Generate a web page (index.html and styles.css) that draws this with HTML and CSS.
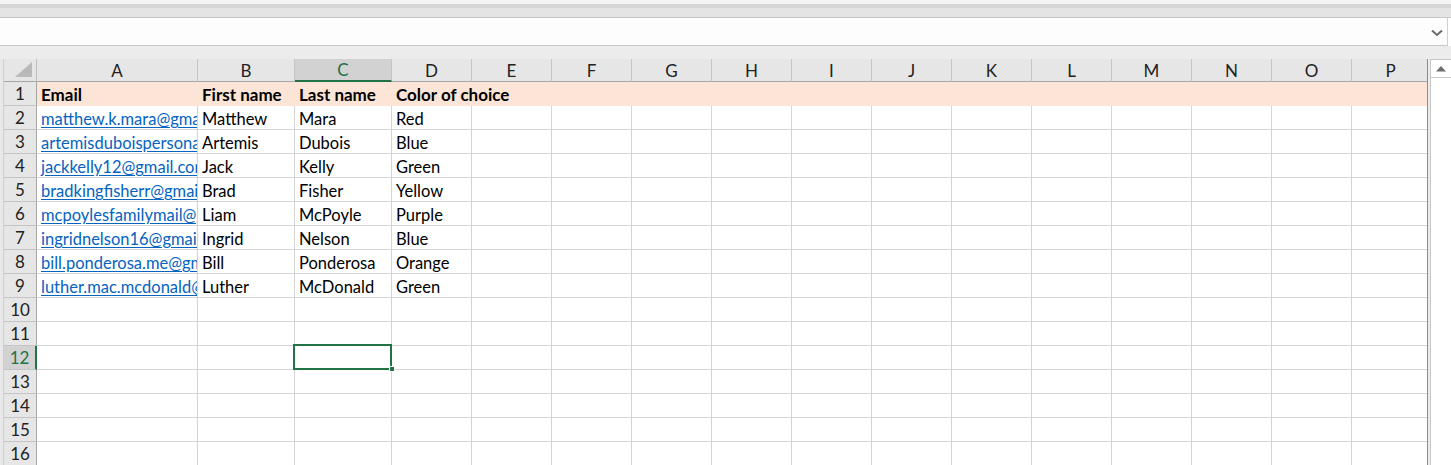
FILE: index.html
```html
<!DOCTYPE html>
<html>
<head>
<meta charset="utf-8">
<link rel="stylesheet" href="styles.css">
</head>
<body>
<div class="ribbon-edge"><div class="band1"></div><div class="band2"></div><div class="band3"></div></div>
<div class="formula-bar">
  <div class="formula-input"></div>
  <svg class="chev" width="12" height="8" viewBox="0 0 12 8"><path d="M1 1.5 L6 6 L11 1.5" fill="none" stroke="#6a6a6a" stroke-width="2"/></svg>
</div>
<div class="gap"></div>
<div class="workspace">
  <div class="gutter"></div>
  <div class="sheet">
    <div class="corner"><svg width="24" height="20" viewBox="0 0 24 20"><polygon points="22,3 22,18 5,18" fill="#b9b9b9"/></svg></div>
    <div class="ch">A</div><div class="ch">B</div><div class="ch sel">C</div><div class="ch">D</div><div class="ch">E</div><div class="ch">F</div><div class="ch">G</div><div class="ch">H</div><div class="ch">I</div><div class="ch">J</div><div class="ch">K</div><div class="ch">L</div><div class="ch">M</div><div class="ch">N</div><div class="ch">O</div><div class="ch">P</div>

    <div class="rh">1</div><div class="c hd">Email</div><div class="c hd">First name</div><div class="c hd">Last name</div><div class="c hd over">Color of choice</div><div class="c hd"></div><div class="c hd"></div><div class="c hd"></div><div class="c hd"></div><div class="c hd"></div><div class="c hd"></div><div class="c hd"></div><div class="c hd"></div><div class="c hd"></div><div class="c hd"></div><div class="c hd"></div><div class="c hd"></div>

    <div class="rh">2</div><div class="c link">matthew.k.mara@gmail.com</div><div class="c">Matthew</div><div class="c">Mara</div><div class="c">Red</div><div class="c"></div><div class="c"></div><div class="c"></div><div class="c"></div><div class="c"></div><div class="c"></div><div class="c"></div><div class="c"></div><div class="c"></div><div class="c"></div><div class="c"></div><div class="c"></div>

    <div class="rh">3</div><div class="c link">artemisduboispersonal@gmail.com</div><div class="c">Artemis</div><div class="c">Dubois</div><div class="c">Blue</div><div class="c"></div><div class="c"></div><div class="c"></div><div class="c"></div><div class="c"></div><div class="c"></div><div class="c"></div><div class="c"></div><div class="c"></div><div class="c"></div><div class="c"></div><div class="c"></div>

    <div class="rh">4</div><div class="c link">jackkelly12@gmail.com</div><div class="c">Jack</div><div class="c">Kelly</div><div class="c">Green</div><div class="c"></div><div class="c"></div><div class="c"></div><div class="c"></div><div class="c"></div><div class="c"></div><div class="c"></div><div class="c"></div><div class="c"></div><div class="c"></div><div class="c"></div><div class="c"></div>

    <div class="rh">5</div><div class="c link">bradkingfisherr@gmail.com</div><div class="c">Brad</div><div class="c">Fisher</div><div class="c">Yellow</div><div class="c"></div><div class="c"></div><div class="c"></div><div class="c"></div><div class="c"></div><div class="c"></div><div class="c"></div><div class="c"></div><div class="c"></div><div class="c"></div><div class="c"></div><div class="c"></div>

    <div class="rh">6</div><div class="c link">mcpoylesfamilymail@gmail.com</div><div class="c">Liam</div><div class="c">McPoyle</div><div class="c">Purple</div><div class="c"></div><div class="c"></div><div class="c"></div><div class="c"></div><div class="c"></div><div class="c"></div><div class="c"></div><div class="c"></div><div class="c"></div><div class="c"></div><div class="c"></div><div class="c"></div>

    <div class="rh">7</div><div class="c link">ingridnelson16@gmail.com</div><div class="c">Ingrid</div><div class="c">Nelson</div><div class="c">Blue</div><div class="c"></div><div class="c"></div><div class="c"></div><div class="c"></div><div class="c"></div><div class="c"></div><div class="c"></div><div class="c"></div><div class="c"></div><div class="c"></div><div class="c"></div><div class="c"></div>

    <div class="rh">8</div><div class="c link">bill.ponderosa.me@gmail.com</div><div class="c">Bill</div><div class="c">Ponderosa</div><div class="c">Orange</div><div class="c"></div><div class="c"></div><div class="c"></div><div class="c"></div><div class="c"></div><div class="c"></div><div class="c"></div><div class="c"></div><div class="c"></div><div class="c"></div><div class="c"></div><div class="c"></div>

    <div class="rh">9</div><div class="c link">luther.mac.mcdonald@gmail.com</div><div class="c">Luther</div><div class="c">McDonald</div><div class="c">Green</div><div class="c"></div><div class="c"></div><div class="c"></div><div class="c"></div><div class="c"></div><div class="c"></div><div class="c"></div><div class="c"></div><div class="c"></div><div class="c"></div><div class="c"></div><div class="c"></div>

    <div class="rh">10</div><div class="c"></div><div class="c"></div><div class="c"></div><div class="c"></div><div class="c"></div><div class="c"></div><div class="c"></div><div class="c"></div><div class="c"></div><div class="c"></div><div class="c"></div><div class="c"></div><div class="c"></div><div class="c"></div><div class="c"></div><div class="c"></div>

    <div class="rh">11</div><div class="c"></div><div class="c"></div><div class="c"></div><div class="c"></div><div class="c"></div><div class="c"></div><div class="c"></div><div class="c"></div><div class="c"></div><div class="c"></div><div class="c"></div><div class="c"></div><div class="c"></div><div class="c"></div><div class="c"></div><div class="c"></div>

    <div class="rh sel">12</div><div class="c"></div><div class="c"></div><div class="c active"></div><div class="c"></div><div class="c"></div><div class="c"></div><div class="c"></div><div class="c"></div><div class="c"></div><div class="c"></div><div class="c"></div><div class="c"></div><div class="c"></div><div class="c"></div><div class="c"></div><div class="c"></div>

    <div class="rh">13</div><div class="c"></div><div class="c"></div><div class="c"></div><div class="c"></div><div class="c"></div><div class="c"></div><div class="c"></div><div class="c"></div><div class="c"></div><div class="c"></div><div class="c"></div><div class="c"></div><div class="c"></div><div class="c"></div><div class="c"></div><div class="c"></div>

    <div class="rh">14</div><div class="c"></div><div class="c"></div><div class="c"></div><div class="c"></div><div class="c"></div><div class="c"></div><div class="c"></div><div class="c"></div><div class="c"></div><div class="c"></div><div class="c"></div><div class="c"></div><div class="c"></div><div class="c"></div><div class="c"></div><div class="c"></div>

    <div class="rh">15</div><div class="c"></div><div class="c"></div><div class="c"></div><div class="c"></div><div class="c"></div><div class="c"></div><div class="c"></div><div class="c"></div><div class="c"></div><div class="c"></div><div class="c"></div><div class="c"></div><div class="c"></div><div class="c"></div><div class="c"></div><div class="c"></div>

    <div class="rh">16</div><div class="c"></div><div class="c"></div><div class="c"></div><div class="c"></div><div class="c"></div><div class="c"></div><div class="c"></div><div class="c"></div><div class="c"></div><div class="c"></div><div class="c"></div><div class="c"></div><div class="c"></div><div class="c"></div><div class="c"></div><div class="c"></div>
  </div>
  <div class="scrollbar">
    <div class="sb-up"><svg width="12" height="7" viewBox="0 0 12 7"><polygon points="1,6.5 11,6.5 6,1" fill="#6d6d6d"/></svg></div>
    <div class="sb-track"></div>
  </div>
</div>
</body>
</html>
```
FILE: styles.css
```css
html, body {
  margin: 0;
  padding: 0;
  height: 465px;
  overflow: hidden;
  background: #ffffff;
  font-family: Lato, "Liberation Sans", sans-serif;
}

.ribbon-edge {
  height: 17px;
  display: flex;
  flex-direction: column;
  border-bottom: 1px solid #c6c6c6;
}
.band1 { height: 4px; background: #f3f3f3; }
.band2 { height: 4px; background: #d6d6d6; }
.band3 { flex: 1; background: #e4e4e4; }

.formula-bar {
  height: 28px;
  width: 1448px;
  box-sizing: border-box;
  background: #fdfdfd;
  border-right: 1px solid #d0d0d0;
  border-bottom: 1px solid #c6c6c6;
  display: flex;
  align-items: center;
}
.formula-input { flex: 1; }
.chev { margin-right: 4px; margin-top: 2px; }

.gap {
  height: 13px;
  background: #ececec;
}

.workspace {
  display: flex;
  height: 420px;
  background: #ececec;
}
.gutter {
  width: 4px;
  background: #e8e8e8;
  border-right: 1px solid #cfcfcf;
  box-sizing: border-box;
}

.sheet {
  display: grid;
  grid-template-columns: 33px 161px 97px 97px repeat(12, 80px) 78px;
  grid-template-rows: 23px repeat(16, 24px);
  background: #ffffff;
  border-right: 1px solid #8c8c8c;
  overflow: hidden;
}

.corner {
  background: #e6e6e6;
  border-right: 1px solid #bdbdbd;
  border-bottom: 1px solid #a6a6a6;
  box-sizing: border-box;
  display: flex;
  align-items: flex-start;
  justify-content: flex-end;
  padding-right: 2px;
}

.ch {
  background: #e6e6e6;
  border-bottom: 1px solid #a6a6a6;
  border-right: 1px solid #c4c4c4;
  box-sizing: border-box;
  text-align: center;
  font-size: 17px;
  line-height: 23px;
  color: #222222;
}
.ch.sel {
  background: #d2d2d2;
  color: #217346;
  border-bottom: 2px solid #217346;
  line-height: 22px;
}

.rh {
  background: #e6e6e6;
  border-right: 1px solid #a6a6a6;
  border-bottom: 1px solid #c4c4c4;
  box-sizing: border-box;
  text-align: center;
  font-size: 17px;
  line-height: 24px;
  color: #222222;
}
.rh.sel {
  background: #d2d2d2;
  color: #217346;
  border-right: 2px solid #217346;
}

.c {
  border-right: 1px solid #d4d4d4;
  border-bottom: 1px solid #d4d4d4;
  box-sizing: border-box;
  font-size: 16.5px;
  line-height: 22px;
  padding-top: 2px;
  padding-left: 4px;
  white-space: nowrap;
  overflow: hidden;
  color: #000000;
  position: relative;
}
.c.hd {
  background: #fce4d6;
  border-right-color: #fce4d6;
  border-bottom-color: #fce4d6;
  font-weight: bold;
  font-size: 17px;
  line-height: 23px;
  padding-top: 1px;
}
.c.hd.over {
  overflow: visible;
  z-index: 1;
}
.c.link {
  color: #0563c1;
  text-decoration: underline;
  text-underline-offset: 2px;
}
.c.active {
  overflow: visible;
}
.c.active::before {
  content: "";
  position: absolute;
  left: -2px;
  top: -2px;
  width: 99px;
  height: 26px;
  border: 2px solid #217346;
  box-sizing: border-box;
  pointer-events: none;
  z-index: 2;
}
.c.active::after {
  content: "";
  position: absolute;
  right: -4px;
  bottom: -3px;
  width: 6px;
  height: 6px;
  background: #217346;
  border: 1px solid #ffffff;
  box-sizing: border-box;
  z-index: 3;
}

.scrollbar {
  width: 20px;
  margin-left: 2px;
  display: flex;
  flex-direction: column;
  background: #ffffff;
  border-left: 1px solid #c6c6c6;
}
.sb-up {
  height: 19px;
  border-bottom: 1px solid #c6c6c6;
  border-top: 1px solid #c6c6c6;
  box-sizing: border-box;
  display: flex;
  align-items: center;
  justify-content: center;
}
.sb-track { flex: 1; }
```
